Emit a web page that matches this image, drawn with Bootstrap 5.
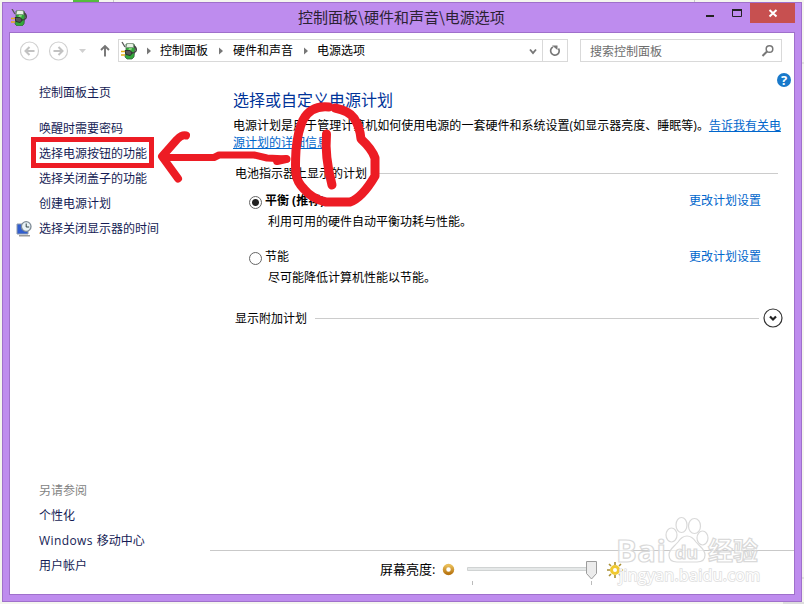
<!DOCTYPE html>
<html lang="zh-CN">
<head>
<meta charset="utf-8">
<meta name="viewport" content="width=device-width, initial-scale=1">
<title>电源选项</title>
<link href="https://cdn.jsdelivr.net/npm/bootstrap@5.3.0/dist/css/bootstrap.min.css" rel="stylesheet">
<style>
html,body{height:604px;overflow:hidden}
body{background:#f4f5ee;font-family:"Open Sans","Noto Sans CJK SC",sans-serif;font-size:12px;line-height:18px;color:#000;padding:2px}
svg{display:block;flex:none}
.zh{font-family:"Noto Sans CJK SC",sans-serif}
.backdrop{left:0;top:0}
.win{width:800px;height:600px;background:#be8cee;border:1px solid #9f70cb;padding:0 6px 6px}
.titlebar{height:29px;padding-left:2px}
.titlebar .caption{font-size:15px;line-height:26px;padding-bottom:2px;color:#2b2233;padding-right:20px}
.closebtn{width:45px;height:20px;background:#c75050;border:0}
.ctl{right:0;top:0}
.client{height:563px;border:1px solid #9f70cb;background:#fff}
.toolbar{height:34px;padding:6px 12px 0 10px}
.address{width:450px;height:23px;border:1px solid #d9d9d9;line-height:19px}
.finder{width:202px;height:23px;border:1px solid #d9d9d9;color:#6d6d6d;padding:0 5px 0 9px;margin-left:12px}
.refresh{width:25px;height:21px;border-left:1px solid #d9d9d9}
.side{width:200px;padding:17px 0 16px 6px}
.side a{display:flex;align-items:center;height:25px;color:#151c55;text-decoration:none;white-space:nowrap}
.side a .slot{width:16px;margin-right:7px;flex:none}
.side .home{height:18px;margin-bottom:14px}
.side .also{color:#838383;height:25px;padding-left:23px;line-height:25px}
.side .latin{letter-spacing:.4px;margin-right:4px}
.pane h1{font-size:16px;line-height:24px;color:#003399;margin:0;font-weight:400}
.body-pad{padding:21px 11px 0 23px;height:483px}
.intro{line-height:17px;margin:5px 0 0;white-space:nowrap}
.intro .lead-in{letter-spacing:.02px}
.body-pad a{color:#0066cc}
.rule{height:1px;background:#ccc}
.group{height:18px;padding-left:2px}
.group-first{margin-top:13px;margin-right:5px}
.group-first span,.group-more span{padding-top:1px}
.group-more{margin-top:5px}
.plan{padding:0 22px 0 16px;height:56px}
.plan-first{margin-top:10px}
.plan a{text-decoration:none}
.radio{width:13px;height:13px;border:1px solid #666;border-radius:50%;margin-top:4px;margin-right:3px}
.radio.on{background:radial-gradient(circle,#222 0 3px,#fff 4px)}
.desc{line-height:18px;margin-top:3px;margin-left:3px}
.bright{height:44px;border-top:1px solid #c9c9c9;padding-left:170px;font-size:13px}
.bright span{margin-top:9px}
.overlay{left:0;top:0;pointer-events:none}
</style>
<script src="https://cdn.jsdelivr.net/npm/bootstrap@5.3.0/dist/js/bootstrap.bundle.min.js"></script>
</head>
<body>
<svg class="backdrop position-absolute" width="804" height="604"><path d="M73 0h26v2H73z" fill="#55bd3e"/><path d="M113.500 0v2M694.500 0v2" stroke="#c8c8c8"/><path d="M802 63h2M802 578h2" stroke="#ccc"/><path d="M783 602h21v2h-21z" fill="#ddd"/></svg>
<svg width="0" height="0" class="position-absolute"><defs><g id="power">
<path d="M5 2h8l1 4-1 9-2 2H6l-2-2 1-6z" fill="#32a83a" stroke="#3b6241" stroke-width=".8"/><path d="M6 1.500h6l1 4H5z" fill="#e7f2e5" stroke="#788978" stroke-width=".7"/><path d="M8 6h3l-1 3H7z" fill="#80d875"/><path d="M1 0l3 5" stroke="#555" stroke-width="1.300"/><path d="M13 4q3 2 2 5-1 2-4 2" fill="none" stroke="#444" stroke-width="1.600"/><path d="M4 8.500h5q4 2.500 0 5L5 12.500z" fill="#565656" stroke="#222" stroke-width=".8"/><path d="M0 9.500h4M0 13h4" stroke="#e3ae15" stroke-width="1.700"/></g>
<linearGradient id="gold" x2="0" y2="1"><stop stop-color="#e8bc57"/><stop offset="1" stop-color="#b97713"/></linearGradient></defs></svg>
<div class="win position-relative">
  <header class="titlebar position-relative d-flex align-items-center zh">
    <svg width="17" height="17"><use href="#power"/></svg>
    <div class="caption flex-grow-1 text-center">控制面板\硬件和声音\电源选项</div>
    <div class="ctl position-absolute d-flex">
      <svg width="79" height="20"><path d="M35 13h8" stroke="#222" stroke-width="2"/><path d="M61.500 7.500h9v6h-9z" fill="none" stroke="#222"/><path d="M61 7h10" stroke="#222" stroke-width="2"/></svg>
      <button class="closebtn p-0" aria-label="关闭"><svg width="45" height="20"><path d="M19.500 7l7 6.500M26.500 7l-7 6.500" stroke="#fff" stroke-width="2"/></svg></button>
    </div>
  </header>
  <section class="client d-flex flex-column">
    <nav class="toolbar d-flex zh">
      <svg width="98" height="23"><g fill="none" stroke="#d0d0d0" stroke-width="1.200"><circle cx="9.500" cy="12" r="9"/><circle cx="38.500" cy="12" r="9"/></g><g fill="none" stroke="#c2c2c2" stroke-width="2"><path d="M14.500 12H6M9.500 8L5.500 12l4 4M33.500 12H42M38.500 8l4 4-4 4"/></g><path d="M59 10h7l-3.500 4z" fill="#d0d0d0"/><path d="M85 17.500V7.500M81 11l4-4 4 4" fill="none" stroke="#757575" stroke-width="1.900"/></svg>
      <div class="address d-flex">
        <svg width="41" height="21"><use href="#power" x="2" y="2"/><path d="M28 7.500v7l4-3.500z" fill="#777"/></svg>
        <span>控制面板</span><svg width="25" height="21"><path d="M11 7.500v7l4-3.500z" fill="#777"/></svg>
        <span>硬件和声音</span><svg width="24" height="21"><path d="M11 7.500v7l4-3.500z" fill="#777"/></svg>
        <span class="flex-grow-1">电源选项</span>
        <svg width="14" height="21"><path d="M2 9.500l3 3.500 3-3.500" fill="none" stroke="#777" stroke-width="1.900"/></svg>
        <span class="refresh"><svg width="24" height="21"><path d="M10 7A4.300 4.300 0 1 0 15.500 8.500" fill="none" stroke="#777" stroke-width="1.700"/><path d="M9 5.500h5.500V10z" fill="#777"/></svg></span>
      </div>
      <div class="finder d-flex justify-content-between align-items-center"><span>搜索控制面板</span><svg width="16" height="16"><circle cx="9.500" cy="6" r="3.300" fill="none" stroke="#777" stroke-width="1.500"/><path d="M7 8.500L2.500 13" stroke="#777" stroke-width="2"/></svg></div>
    </nav>
    <div class="d-flex flex-grow-1">
      <aside class="side d-flex flex-column">
        <a class="home" href="#"><span class="slot"></span>控制面板主页</a>
        <a href="#"><span class="slot"></span>唤醒时需要密码</a>
        <a href="#"><span class="slot"></span>选择电源按钮的功能</a>
        <a href="#"><span class="slot"></span>选择关闭盖子的功能</a>
        <a href="#"><span class="slot"></span>创建电源计划</a>
        <a href="#"><span class="slot"><svg width="16" height="16"><path d="M1 3h11v10H1z" fill="#315ed0" stroke="#8e9aab"/><path d="M3 14h11v1.500H3z" fill="#999"/><circle cx="10.200" cy="5.500" r="4.800" fill="#e9f2f6" stroke="#7e8b96" stroke-width="1.300"/><path d="M10.200 2.500v3.500h3" fill="none" stroke="#344" stroke-width="1"/></svg></span>选择关闭显示器的时间</a>
        <div class="also mt-auto">另请参阅</div>
        <a href="#"><span class="slot"></span>个性化</a>
        <a href="#"><span class="slot"></span><span class="latin">Windows</span> 移动中心</a>
        <a href="#"><span class="slot"></span>用户帐户</a>
      </aside>
      <main class="pane flex-grow-1">
        <div class="body-pad">
          <h1>选择或自定义电源计划</h1>
          <p class="intro"><span class="lead-in">电源计划是用于管理计算机如何使用电源的一套硬件和系统设置(如显示器亮度、睡眠等)。</span><a href="#">告诉我有关电<br>源计划的详细信息</a></p>
          <div class="group group-first d-flex align-items-center"><span>电池指示器上显示的计划</span><div class="rule flex-grow-1 ms-2"></div></div>
          <div class="plan plan-first d-flex">
            <div class="radio on"></div><div class="flex-grow-1"><div class="fw-bold">平衡 (推荐)</div><div class="desc">利用可用的硬件自动平衡功耗与性能。</div></div><a href="#">更改计划设置</a>
          </div>
          <div class="plan d-flex">
            <div class="radio"></div><div class="flex-grow-1"><div>节能</div><div class="desc">尽可能降低计算机性能以节能。</div></div><a href="#">更改计划设置</a>
          </div>
          <div class="group group-more d-flex align-items-center"><span>显示附加计划</span><div class="rule flex-grow-1 ms-2 me-1"></div><svg width="20" height="20"><circle cx="10" cy="10" r="9" fill="none" stroke="#333" stroke-width="1.200"/><path d="M7 8.500l3 3 3-3" fill="none" stroke="#222" stroke-width="2.200"/></svg></div>
        </div>
        <div class="bright d-flex"><span>屏幕亮度:</span></div>
      </main>
    </div>
  </section>
</div>
<svg class="overlay position-absolute" width="804" height="604" viewBox="0 0 804 604">
  <circle cx="784" cy="80" r="7" fill="#1979ca"/><text x="784" y="84.800" text-anchor="middle" font-family="Open Sans,sans-serif" font-weight="700" font-size="13" fill="#fff">?</text>
  <circle cx="448.500" cy="569.500" r="4" fill="#fff" stroke="url(#gold)" stroke-width="3.500"/>
  <path d="M467.500 567.500h120v3h-120z" fill="#e5e8e8" stroke="#d0d3d3"/>
  <path d="M472.500 581v4M591.500 581v4" stroke="#bbb"/>
  <path d="M586.500 561.500h10v12l-5 5.500-5-5.500z" fill="#ececec" stroke="#9c9c9c"/>
  <g stroke="#a98f35" stroke-width="1.600"><path d="M615 562v3M615 575v3M607 570h3M620 570h3M609 564l2 2M619 574l2 2M609 576l2-2M619 566l2-2"/></g><circle cx="615" cy="570" r="3.500" fill="#fff" stroke="#f0c930" stroke-width="3"/>
  <g fill="#fff" fill-opacity=".65" stroke="#d9d9d9" stroke-width="1.200">
    <ellipse cx="671.500" cy="535" rx="5.500" ry="7"/><ellipse cx="681.500" cy="525" rx="5.500" ry="7.500"/><ellipse cx="694.500" cy="526" rx="6" ry="7.500"/><ellipse cx="702.500" cy="538" rx="5.500" ry="7"/>
    <path d="M687 536q-5 0-9 6c-4 5-9 7-9 13q0 7 8 7h20q8 0 8-7c0-6-5-8-9-13q-4-6-9-6z"/>
    <g font-family="Open Sans,sans-serif" font-weight="700"><text x="616" y="561.500" font-size="31" textLength="50">Bai</text><text x="675" y="559" font-size="18" textLength="23">du</text><text x="708" y="560" font-size="25" textLength="50" font-family="Noto Sans CJK SC,sans-serif">经验</text></g>
  </g>
  <text x="619" y="581" font-family="Open Sans,sans-serif" font-size="16" textLength="141" fill="#fff" stroke="#dedede" stroke-width="1.600" paint-order="stroke">jingyan.baidu.com</text>
  <g fill="none" stroke="#ed1c24" stroke-linecap="round" stroke-linejoin="round">
    <path d="M33.500 139.500h118v26h-118z" stroke-width="5" stroke-linejoin="miter"/>
    <path d="M186 135.500q-4-1-9 4l-15 17 16 22" stroke-width="8"/>
    <path d="M163 157.500h51l5-2.500h35l13 3 20 1" stroke-width="7"/><path d="M277 161l9-2" stroke-width="8"/>
    <path d="M329 107q-18-2-26 13-5 10-7 30-1 18 0 24 1 8 8 15 8 10 22 13h24q12-4 25-26v-18q-3-9-14-19-1-12-7-21-5-7-19-10M326.500 134q-2 22 5.500 51" stroke-width="9"/>
  </g>
</svg>
</body>
</html>
